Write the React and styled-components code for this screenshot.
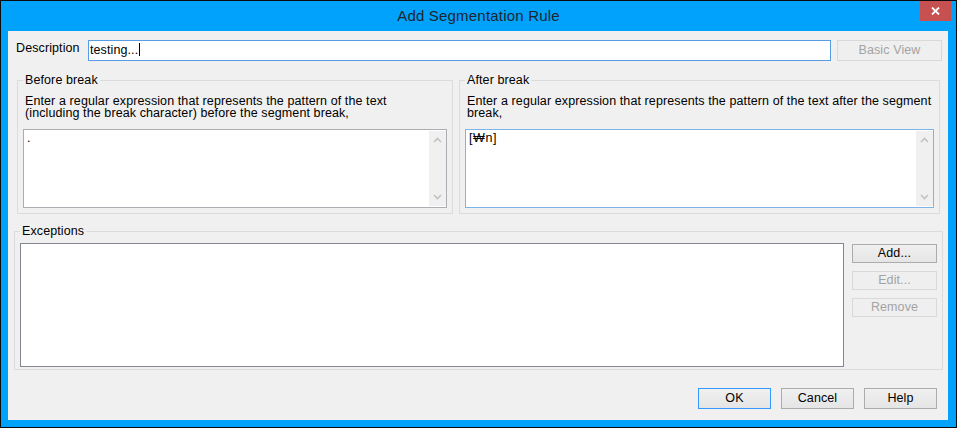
import styled, { createGlobalStyle } from "styled-components";

const GlobalStyle = createGlobalStyle`
  html, body {
    margin: 0;
    padding: 0;
    background: #ffffff;
  }
  * {
    box-sizing: border-box;
  }
`;

const uiFont = `"Liberation Sans", Arial, "Noto Sans CJK KR", sans-serif`;

const Window = styled.div`
  width: 957px;
  height: 428px;
  border: 1px solid #0b0b0b;
  background: #00a2fb;
  display: flex;
  flex-direction: column;
  font-family: ${uiFont};
  font-size: 12.5px;
  letter-spacing: 0.1px;
  color: #000;
`;

const TitleBar = styled.div`
  height: 30px;
  display: grid;
  grid-template-columns: 1fr auto 1fr;
`;

const Title = styled.div`
  line-height: 30px;
  font-size: 15px;
  letter-spacing: 0.2px;
  color: #1e2530;
`;

const CloseButton = styled.div`
  justify-self: end;
  align-self: start;
  width: 31px;
  height: 20px;
  margin-right: 5px;
  background: #c75050;
  display: flex;
  align-items: center;
  justify-content: center;
`;

const Client = styled.div`
  flex: 1;
  margin: 0 8px 7px 7px;
  background: #f0f0f0;
  display: flex;
  flex-direction: column;
  padding-top: 9px;
`;

const DescriptionRow = styled.div`
  display: flex;
  height: 21px;
  padding: 0 6px 0 8px;
  gap: 6px;
`;

const FieldLabel = styled.div`
  width: 66px;
  line-height: 14px;
  padding-top: 1px;
`;

const TextField = styled.div`
  flex: 1;
  border: 1px solid ${(p) => (p.$focused ? "#569de5" : "#abadb3")};
  background: #fff;
  padding: 2px 1px 0;
  line-height: 15px;
  white-space: nowrap;
`;

const Caret = styled.span`
  display: inline-block;
  width: 1px;
  height: 13px;
  margin-left: 1px;
  background: #000;
  vertical-align: -2px;
`;

const Button = styled.button`
  width: ${(p) => p.$w || 73}px;
  height: ${(p) => p.$h || 21}px;
  padding: 0;
  margin: 0;
  font-family: ${uiFont};
  font-size: 12.5px;
  letter-spacing: 0.1px;
  line-height: 1;
  color: #000;
  border: 1px solid ${(p) => (p.$primary ? "#3399ff" : "#acacac")};
  background: linear-gradient(#f0f0f0, #e5e5e5);
  &:disabled {
    color: #a3a3a3;
    border-color: #d9d9d9;
    background: #efefef;
  }
`;

const BreakRow = styled.div`
  display: flex;
  gap: 6px;
  margin-top: 12px;
  padding: 0 8px 0 9px;
`;

const GroupBox = styled.fieldset`
  margin: 0;
  min-width: 0;
  border: 1px solid #dcdcdc;
  padding: 8px 5px 5px;
  width: ${(p) => (p.$w ? `${p.$w}px` : "auto")};
  flex: ${(p) => (p.$w ? "none" : 1)};
  & > legend {
    padding: 0 2px;
    line-height: 14px;
  }
`;

const Hint = styled.div`
  line-height: 12px;
  margin: 0 0 10px 2px;
  white-space: nowrap;
`;

const MemoField = styled.div`
  height: 79px;
  display: flex;
  border: 1px solid ${(p) => (p.$hover ? "#7eb4ea" : "#abadb3")};
  background: #fff;
`;

const MemoText = styled.div`
  flex: 1;
  padding: 1px 3px;
  line-height: 14px;
  letter-spacing: 0.6px;
`;

const ScrollTrack = styled.div`
  width: 17px;
  margin: 1px 0;
  background: #f0f0f0;
  display: flex;
  flex-direction: column;
  justify-content: space-between;
  align-items: center;
  padding: 6px 0 6px;
`;

const ExceptionsBox = styled.fieldset`
  margin: 10px 5px 0 6px;
  min-width: 0;
  border: 1px solid #dcdcdc;
  padding: 5px 5px 2px;
  & > legend {
    padding: 0 2px;
    line-height: 14px;
  }
`;

const ExceptionsBody = styled.div`
  display: flex;
  gap: 8px;
  height: 124px;
`;

const ListBox = styled.div`
  flex: 1;
  border: 1px solid #828790;
  background: #fff;
`;

const ButtonColumn = styled.div`
  width: 85px;
  display: flex;
  flex-direction: column;
  gap: 8px;
  padding-top: 1px;
`;

const Footer = styled.div`
  display: flex;
  justify-content: flex-end;
  gap: 10px;
  margin-top: 18px;
  padding-right: 11px;
`;

function Chevron({ up }) {
  return (
    <svg width="9" height="6" viewBox="0 0 9 6">
      <polyline
        points={up ? "1,5 4.5,1.5 8,5" : "1,1 4.5,4.5 8,1"}
        fill="none"
        stroke="#c2c2c2"
        strokeWidth="1.6"
      />
    </svg>
  );
}

function ScrollBar() {
  return (
    <ScrollTrack>
      <Chevron up />
      <Chevron />
    </ScrollTrack>
  );
}

export default function App() {
  return (
    <>
      <GlobalStyle />
      <Window>
        <TitleBar>
          <span />
          <Title>Add Segmentation Rule</Title>
          <CloseButton>
            <svg width="9" height="8" viewBox="0 0 9 8">
              <path d="M1 0.5 L8 7.5 M8 0.5 L1 7.5" stroke="#fff" strokeWidth="1.8" />
            </svg>
          </CloseButton>
        </TitleBar>
        <Client>
          <DescriptionRow>
            <FieldLabel>Description</FieldLabel>
            <TextField $focused>
              testing...
              <Caret />
            </TextField>
            <Button disabled $w={105} $h={21}>
              Basic View
            </Button>
          </DescriptionRow>

          <BreakRow>
            <GroupBox $w={436}>
              <legend>Before break</legend>
              <Hint>
                Enter a regular expression that represents the pattern of the text
                <br />
                (including the break character) before the segment break,
              </Hint>
              <MemoField>
                <MemoText>.</MemoText>
                <ScrollBar />
              </MemoField>
            </GroupBox>
            <GroupBox>
              <legend>After break</legend>
              <Hint>
                Enter a regular expression that represents the pattern of the text after the segment
                <br />
                break,
              </Hint>
              <MemoField $hover>
                <MemoText>[₩n]</MemoText>
                <ScrollBar />
              </MemoField>
            </GroupBox>
          </BreakRow>

          <ExceptionsBox>
            <legend>Exceptions</legend>
            <ExceptionsBody>
              <ListBox />
              <ButtonColumn>
                <Button $w={85} $h={19}>Add...</Button>
                <Button disabled $w={85} $h={19}>Edit...</Button>
                <Button disabled $w={85} $h={19}>Remove</Button>
              </ButtonColumn>
            </ExceptionsBody>
          </ExceptionsBox>

          <Footer>
            <Button $primary>OK</Button>
            <Button>Cancel</Button>
            <Button>Help</Button>
          </Footer>
        </Client>
      </Window>
    </>
  );
}
